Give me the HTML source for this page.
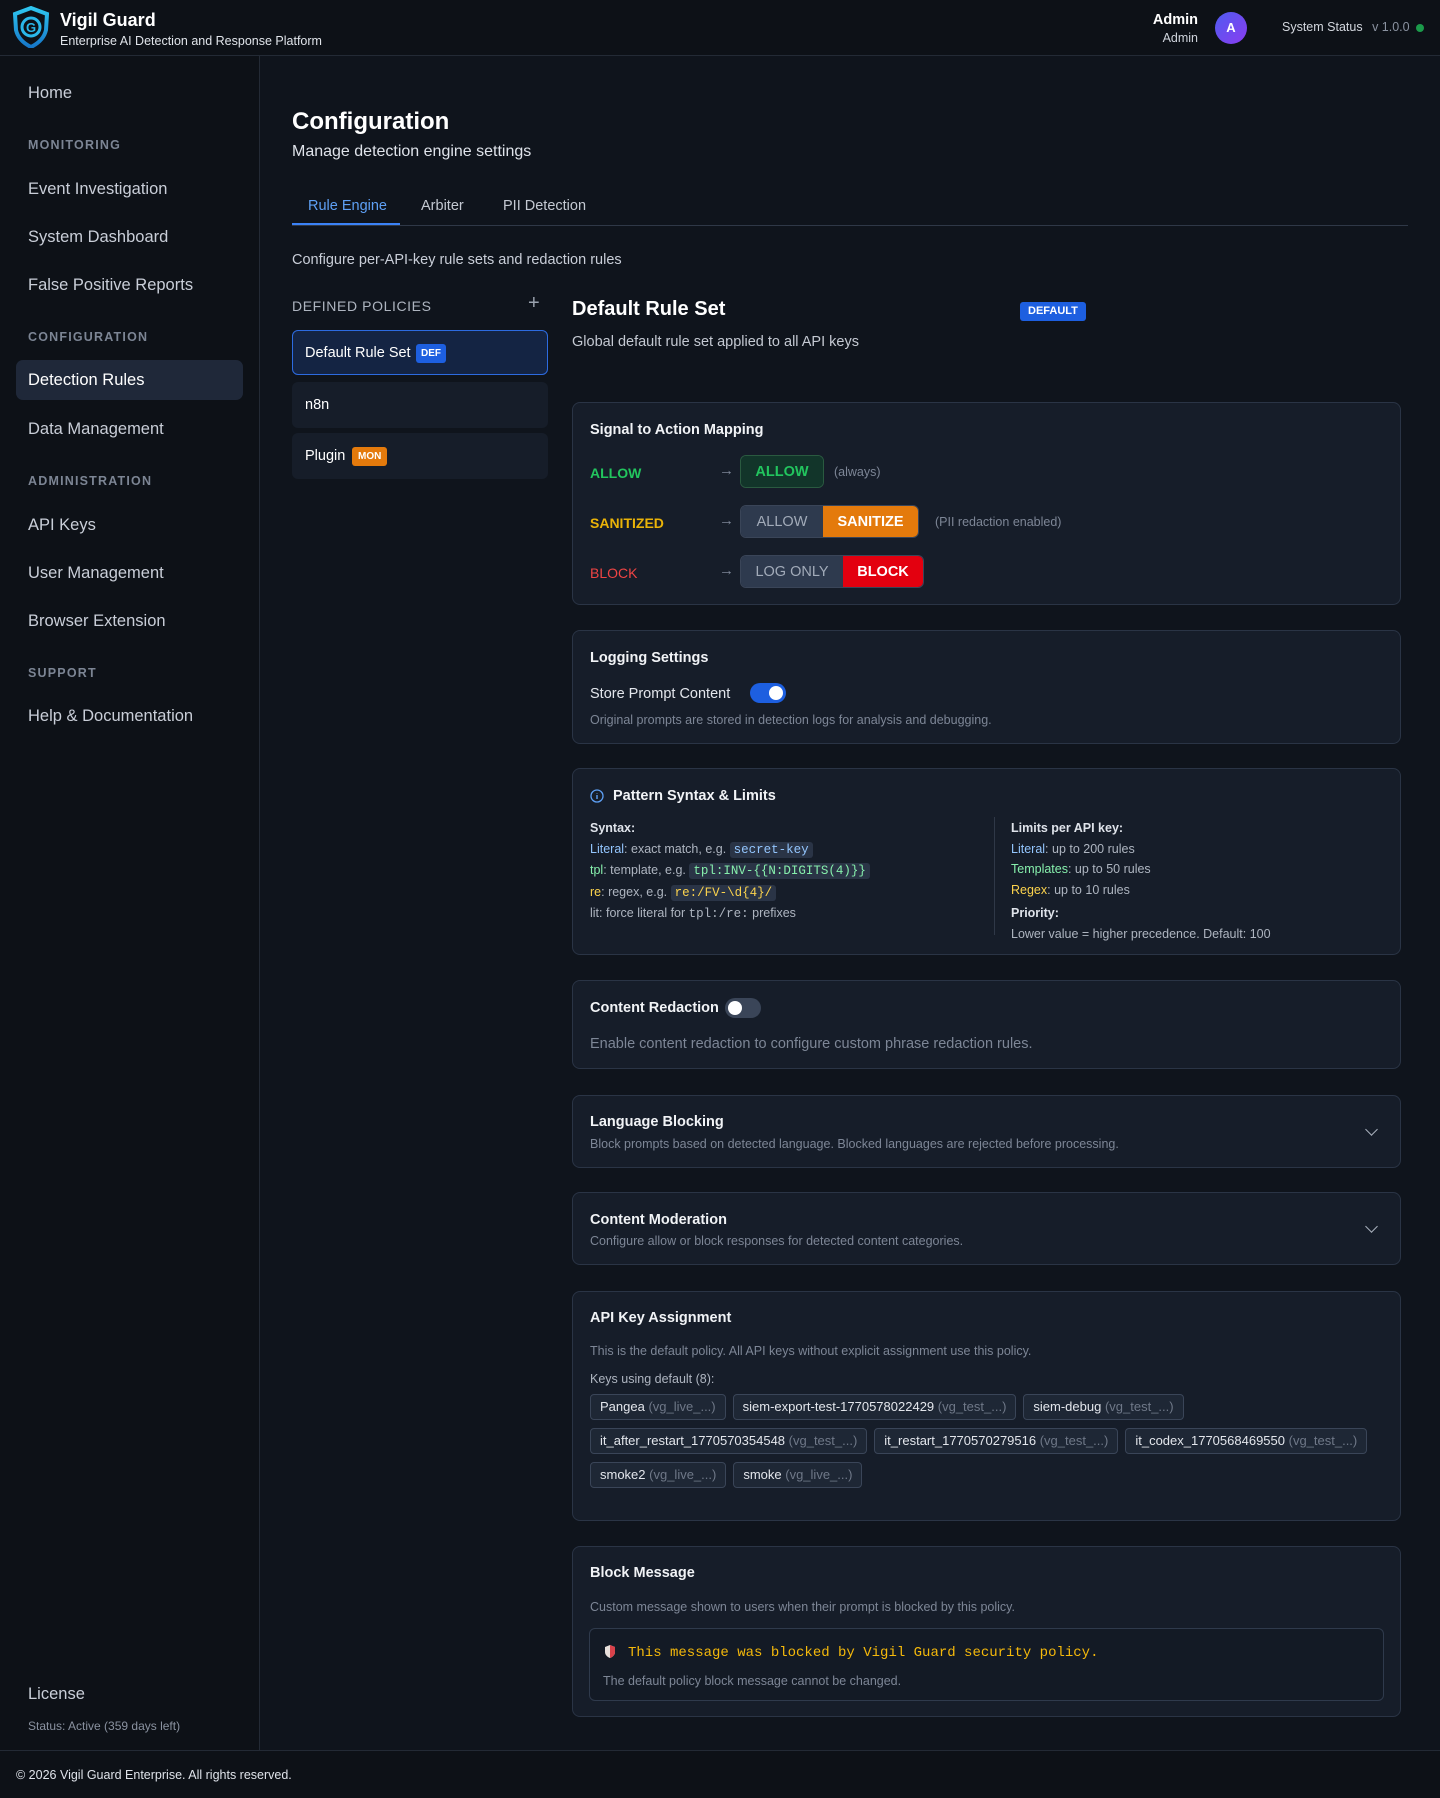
<!DOCTYPE html>
<html><head><meta charset="utf-8"><style>
*{box-sizing:border-box;margin:0;padding:0}
body{width:1440px;height:1798px;background:#0f141c;font-family:"Liberation Sans",sans-serif;color:#e6e9ef;position:relative;overflow:hidden}
.abs{position:absolute}
header{position:absolute;left:0;top:0;width:1440px;height:56px;background:#0d1117;border-bottom:1px solid #232a35}
.side{position:absolute;left:0;top:56px;width:260px;height:1694px;background:#0d1117;border-right:1px solid #232a35}
.nav{position:absolute;left:28px;font-size:16.5px;color:#c9ced8;margin-top:2px}
.sec{position:absolute;left:28px;font-size:12.5px;letter-spacing:1.2px;color:#7c8594;font-weight:bold;margin-top:2px}
footer{position:absolute;left:0;top:1750px;width:1440px;height:48px;background:#0d1117;border-top:1px solid #232a35;font-size:12.5px;color:#dfe3ea;padding:17px 0 0 16px}
.card{position:absolute;left:572px;width:829px;background:#161d29;border:1px solid #2a3445;border-radius:8px}
.ct{position:absolute;left:17px;font-size:14.5px;font-weight:bold;color:#f1f3f6}
.muted{color:#7d8696}
.lbl{position:absolute;left:17px;font-size:14px;font-weight:bold}
.arrow{position:absolute;left:146px;color:#7d8696;font-size:15px}
.btns{position:absolute;left:167px;height:33px;display:flex;border:1px solid #3a4558;border-radius:6px;overflow:hidden;font-size:14.5px;font-weight:bold}
.btns span{display:flex;align-items:center;justify-content:center}
.code{font-family:"Liberation Mono",monospace;background:#2a3446;border-radius:3px;padding:1px 4px}
.chip{display:inline-block;height:26px;line-height:24px;border:1px solid #3a4558;background:#1e2735;border-radius:4px;padding:0 9px;font-size:13px;color:#e3e6ec;margin-right:7px}
.chip i{font-style:normal;color:#6f7888}
.sm{font-size:12.5px}
.chev{position:absolute;right:24px;width:9px;height:9px;border-right:1.6px solid #aab1bd;border-bottom:1.6px solid #aab1bd;transform:rotate(45deg)}
</style></head><body>
<header>
<svg class="abs" style="left:12px;top:6px" width="38" height="42" viewBox="0 0 38 42"><defs><linearGradient id="g" x1="0" y1="0" x2="0" y2="1"><stop offset="0" stop-color="#2ec5f0"/><stop offset="1" stop-color="#1677c9"/></linearGradient></defs><path d="M19 2 L35 8 L34 24 C32 33 25 38 19 41 C13 38 6 33 4 24 L3 8 Z" fill="none" stroke="url(#g)" stroke-width="4"/><circle cx="19" cy="21" r="9" fill="none" stroke="#2ab8ea" stroke-width="3"/><text x="19" y="26" font-size="13" font-weight="bold" text-anchor="middle" fill="#2ab8ea" font-family="Liberation Sans">G</text></svg>
<div class="abs" style="left:60px;top:10px;font-size:18px;font-weight:bold;color:#fff">Vigil Guard</div>
<div class="abs" style="left:60px;top:34px;font-size:12.5px;color:#e0e4ea">Enterprise AI Detection and Response Platform</div>
<div class="abs" style="left:1100px;width:98px;text-align:right;top:12px;font-size:14.5px;font-weight:bold;color:#fff">Admin</div>
<div class="abs" style="left:1100px;width:98px;text-align:right;top:31px;font-size:12.5px;color:#cfd4dc">Admin</div>
<div class="abs" style="left:1215px;top:12px;width:32px;height:32px;border-radius:50%;background:linear-gradient(135deg,#4f5cf0,#8a3cf0);font-size:13px;font-weight:bold;color:#fff;text-align:center;line-height:32px">A</div>
<div class="abs" style="left:1282px;top:20px;font-size:12.5px;color:#d3d7de">System Status <span style="color:#8a92a0;margin-left:6px">v 1.0.0</span></div>
<div class="abs" style="left:1416px;top:24px;width:8px;height:8px;border-radius:50%;background:#1b9a4a"></div>
</header>
<div class="side">
<div class="nav" style="top:26px">Home</div>
<div class="sec" style="top:80px">MONITORING</div>
<div class="nav" style="top:122px">Event Investigation</div>
<div class="nav" style="top:170px">System Dashboard</div>
<div class="nav" style="top:218px">False Positive Reports</div>
<div class="sec" style="top:272px">CONFIGURATION</div>
<div class="abs" style="left:16px;top:304px;width:227px;height:40px;background:#1f2839;border-radius:7px"></div>
<div class="nav" style="top:313px;color:#fff">Detection Rules</div>
<div class="nav" style="top:362px">Data Management</div>
<div class="sec" style="top:416px">ADMINISTRATION</div>
<div class="nav" style="top:458px">API Keys</div>
<div class="nav" style="top:506px">User Management</div>
<div class="nav" style="top:554px">Browser Extension</div>
<div class="sec" style="top:608px">SUPPORT</div>
<div class="nav" style="top:649px">Help &amp; Documentation</div>
<div class="nav" style="top:1627px">License</div>
<div class="abs" style="left:28px;top:1663px;font-size:12px;color:#8a92a0">Status: Active (359 days left)</div>
</div>

<div class="abs" style="left:292px;top:108px;font-size:24px;font-weight:bold;color:#fff">Configuration</div>
<div class="abs" style="left:292px;top:143px;font-size:16px;color:#dfe3ea">Manage detection engine settings</div>
<div class="abs" style="left:292px;top:225px;width:1116px;height:1px;background:#2f3847"></div>
<div class="abs" style="left:292px;top:223px;width:108px;height:2px;background:#3b82f6"></div>
<div class="abs" style="left:308px;top:198px;font-size:14.5px;color:#5ea0f5">Rule Engine</div>
<div class="abs" style="left:421px;top:198px;font-size:14.5px;color:#c4c9d2">Arbiter</div>
<div class="abs" style="left:503px;top:198px;font-size:14.5px;color:#c4c9d2">PII Detection</div>
<div class="abs" style="left:292px;top:252px;font-size:14.5px;color:#c9ced8">Configure per-API-key rule sets and redaction rules</div>

<div class="abs" style="left:292px;top:298px;font-size:14px;letter-spacing:.6px;color:#aeb5c0">DEFINED POLICIES</div>
<div class="abs" style="left:528px;top:292px;font-size:20px;color:#9aa2ae">+</div>
<div class="abs" style="left:292px;top:330px;width:256px;height:45px;background:#142443;border:1px solid #2d6be0;border-radius:6px"></div>
<div class="abs" style="left:305px;top:345px;font-size:14.5px;color:#fff">Default Rule Set</div>
<div class="abs" style="left:416px;top:344px;height:19px;padding:0 5px;background:#1d5fe0;border-radius:3px;font-size:10px;font-weight:bold;line-height:19px;color:#fff">DEF</div>
<div class="abs" style="left:292px;top:382px;width:256px;height:46px;background:#161d29;border-radius:6px"></div>
<div class="abs" style="left:305px;top:397px;font-size:14.5px;color:#fff">n8n</div>
<div class="abs" style="left:292px;top:433px;width:256px;height:46px;background:#161d29;border-radius:6px"></div>
<div class="abs" style="left:305px;top:448px;font-size:14.5px;color:#fff">Plugin</div>
<div class="abs" style="left:352px;top:447px;height:19px;padding:0 6px;background:#e47a0c;border-radius:3px;font-size:10px;font-weight:bold;line-height:19px;color:#fff">MON</div>

<div class="abs" style="left:572px;top:298px;font-size:20px;font-weight:bold;color:#fff">Default Rule Set</div>
<div class="abs" style="left:1020px;top:302px;height:19px;padding:0 8px;background:#1d5fe0;border-radius:3px;font-size:11px;font-weight:bold;line-height:19px;color:#fff">DEFAULT</div>
<div class="abs" style="left:572px;top:334px;font-size:14.5px;color:#c4c9d2">Global default rule set applied to all API keys</div>

<div class="card" style="top:402px;height:203px">
<div class="ct" style="top:19px">Signal to Action Mapping</div>
<div class="lbl" style="top:62px;color:#22c55e">ALLOW</div><div class="arrow" style="top:59px">→</div>
<div class="btns" style="top:52px;border-color:#2a5a40"><span style="width:82px;background:#12352a;color:#22c55e">ALLOW</span></div>
<div class="abs sm muted" style="left:261px;top:62px">(always)</div>
<div class="lbl" style="top:112px;color:#eab308">SANITIZED</div><div class="arrow" style="top:109px">→</div>
<div class="btns" style="top:102px"><span style="width:82px;background:#2e3a4e;color:#a2abb9;font-weight:normal">ALLOW</span><span style="width:95px;background:#e47a0c;color:#fff">SANITIZE</span></div>
<div class="abs sm muted" style="left:362px;top:112px">(PII redaction enabled)</div>
<div class="lbl" style="top:162px;color:#ef4444;font-weight:normal">BLOCK</div><div class="arrow" style="top:159px">→</div>
<div class="btns" style="top:152px"><span style="width:102px;background:#2e3a4e;color:#a2abb9;font-weight:normal">LOG ONLY</span><span style="width:80px;background:#e3000f;color:#fff">BLOCK</span></div>
</div>

<div class="card" style="top:630px;height:114px">
<div class="ct" style="top:19px">Logging Settings</div>
<div class="abs" style="left:17px;top:55px;font-size:14.5px;color:#e3e6ec">Store Prompt Content</div>
<div class="abs" style="left:177px;top:52px;width:36px;height:20px;border-radius:10px;background:#1d5fe0"><div style="position:absolute;right:3px;top:3px;width:14px;height:14px;border-radius:50%;background:#fff"></div></div>
<div class="abs sm muted" style="left:17px;top:82px">Original prompts are stored in detection logs for analysis and debugging.</div>
</div>

<div class="card" style="top:768px;height:187px">
<svg class="abs" style="left:17px;top:20px" width="14" height="14" viewBox="0 0 14 14"><circle cx="7" cy="7" r="6" fill="none" stroke="#5ea0f5" stroke-width="1.3"/><path d="M7 6v4M7 4v.5" stroke="#5ea0f5" stroke-width="1.4"/></svg>
<div class="ct" style="left:40px;top:19px">Pattern Syntax &amp; Limits</div>
<div class="abs sm" style="left:17px;top:49px;line-height:20.5px;color:#aeb5c0">
<b style="color:#dfe3ea">Syntax:</b><br>
<span style="color:#93c5fd">Literal</span>: exact match, e.g. <span class="code" style="color:#93c5fd">secret-key</span><br>
<span style="color:#86efac">tpl</span>: template, e.g. <span class="code" style="color:#86efac">tpl:INV-{{N:DIGITS(4)}}</span><br>
<span style="color:#fcd34d">re</span>: regex, e.g. <span class="code" style="color:#fcd34d">re:/FV-\d{4}/</span><br>
lit: force literal for <span style="font-family:'Liberation Mono',monospace">tpl:/re:</span> prefixes</div>
<div class="abs" style="left:421px;top:48px;width:1px;height:118px;background:#2f3847"></div>
<div class="abs sm" style="left:438px;top:49px;line-height:20.5px;color:#aeb5c0">
<b style="color:#dfe3ea">Limits per API key:</b><br>
<span style="color:#93c5fd">Literal</span>: up to 200 rules<br>
<span style="color:#86efac">Templates</span>: up to 50 rules<br>
<span style="color:#fcd34d">Regex</span>: up to 10 rules<br>
<b style="color:#dfe3ea;display:inline-block;margin-top:3px">Priority:</b><br>
Lower value = higher precedence. Default: 100</div>
</div>

<div class="card" style="top:980px;height:89px">
<div class="ct" style="top:19px">Content Redaction</div>
<div class="abs" style="left:152px;top:17px;width:36px;height:20px;border-radius:10px;background:#3a4558"><div style="position:absolute;left:3px;top:3px;width:14px;height:14px;border-radius:50%;background:#fff"></div></div>
<div class="abs muted" style="left:17px;top:55px;font-size:14.5px">Enable content redaction to configure custom phrase redaction rules.</div>
</div>

<div class="card" style="top:1095px;height:73px">
<div class="ct" style="top:18px">Language Blocking</div>
<div class="abs sm muted" style="left:17px;top:41px">Block prompts based on detected language. Blocked languages are rejected before processing.</div>
<div class="chev" style="top:29px"></div>
</div>

<div class="card" style="top:1192px;height:73px">
<div class="ct" style="top:19px">Content Moderation</div>
<div class="abs sm muted" style="left:17px;top:41px">Configure allow or block responses for detected content categories.</div>
<div class="chev" style="top:29px"></div>
</div>

<div class="card" style="top:1291px;height:230px">
<div class="ct" style="top:18px">API Key Assignment</div>
<div class="abs sm muted" style="left:17px;top:52px">This is the default policy. All API keys without explicit assignment use this policy.</div>
<div class="abs sm" style="left:17px;top:80px;color:#aeb5c0">Keys using default (8):</div>
<div class="abs" style="left:17px;top:98px;width:800px;line-height:34px">
<span class="chip">Pangea <i>(vg_live_...)</i></span><span class="chip">siem-export-test-1770578022429 <i>(vg_test_...)</i></span><span class="chip">siem-debug <i>(vg_test_...)</i></span><br>
<span class="chip">it_after_restart_1770570354548 <i>(vg_test_...)</i></span><span class="chip">it_restart_1770570279516 <i>(vg_test_...)</i></span><span class="chip">it_codex_1770568469550 <i>(vg_test_...)</i></span><br>
<span class="chip">smoke2 <i>(vg_live_...)</i></span><span class="chip">smoke <i>(vg_live_...)</i></span>
</div>
</div>

<div class="card" style="top:1546px;height:171px">
<div class="ct" style="top:18px">Block Message</div>
<div class="abs sm muted" style="left:17px;top:53px">Custom message shown to users when their prompt is blocked by this policy.</div>
<div class="abs" style="left:16px;top:81px;width:795px;height:73px;border:1px solid #2f3a4c;border-radius:6px;background:#131a25">
<svg class="abs" style="left:14px;top:15px" width="12" height="15" viewBox="0 0 12 15"><path d="M6 1L11 3V8C11 11 8.5 13 6 14C3.5 13 1 11 1 8V3Z" fill="#e8e0dc"/><path d="M6 1L11 3V8C11 11 8.5 13 6 14Z" fill="#d9414a"/></svg>
<div class="abs" style="left:38px;top:16px;font-family:'Liberation Mono',monospace;font-size:14px;color:#f5b90b">This message was blocked by Vigil Guard security policy.</div>
<div class="abs sm muted" style="left:13px;top:45px">The default policy block message cannot be changed.</div>
</div>
</div>

<footer>© 2026 Vigil Guard Enterprise. All rights reserved.</footer>
</body></html>
